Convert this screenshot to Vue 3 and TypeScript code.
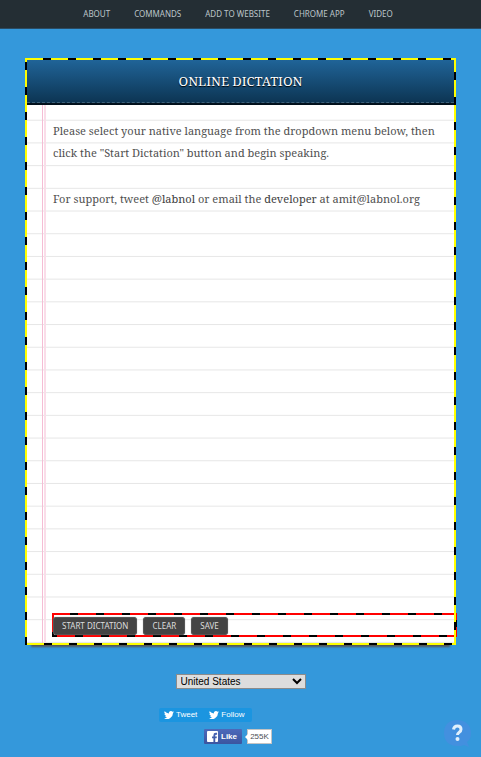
<script setup lang="ts">
import { ref } from 'vue'

interface NavLink {
  label: string
  href: string
}

const links: NavLink[] = [
  { label: 'ABOUT', href: '#about' },
  { label: 'COMMANDS', href: '#commands' },
  { label: 'ADD TO WEBSITE', href: '#website' },
  { label: 'CHROME APP', href: '#app' },
  { label: 'VIDEO', href: '#video' },
]

const countries: string[] = ['United States', 'United Kingdom', 'India', 'France', 'Germany', 'Spain']
const country = ref<string>('United States')
const bird =
  'M24 4.6a10 10 0 0 1-2.8.8 5 5 0 0 0 2.2-2.7 10 10 0 0 1-3.1 1.2 4.9 4.9 0 0 0-8.4 4.5A14 14 0 0 1 1.7 3.1a4.9 4.9 0 0 0 1.5 6.6 5 5 0 0 1-2.2-.6v.1a4.9 4.9 0 0 0 3.9 4.8 5 5 0 0 1-2.2.1 4.9 4.9 0 0 0 4.6 3.4A10 10 0 0 1 0 19.5a14 14 0 0 0 21.5-12.4A10 10 0 0 0 24 4.6z'
</script>

<template>
  <div class="page">
    <nav class="topbar">
      <a v-for="link in links" :key="link.label" :href="link.href">{{ link.label }}</a>
    </nav>

    <main>
      <section class="notepad">
        <header class="title">
          <h1>ONLINE DICTATION</h1>
        </header>
        <div class="paper">
          <div class="rules"></div>
          <div class="note">
            <p>
              Please select your native language from the dropdown menu below, then click the
              "Start Dictation" button and begin speaking.
            </p>
            <p>
              For support, tweet <a href="#labnol">@labnol</a> or email the
              <a href="#developer">developer</a> at amit@labnol.org
            </p>
          </div>
          <div class="actions">
            <button type="button">START DICTATION</button>
            <button type="button">CLEAR</button>
            <button type="button">SAVE</button>
          </div>
        </div>
      </section>

      <div class="language">
        <select v-model="country" aria-label="Language">
          <option v-for="name in countries" :key="name">{{ name }}</option>
        </select>
      </div>

      <div class="social">
        <div class="twitter">
          <a href="#tweet"><svg viewBox="0 0 24 24"><path :d="bird" /></svg>Tweet</a>
          <a href="#follow"><svg viewBox="0 0 24 24"><path :d="bird" /></svg>Follow</a>
        </div>
        <div class="facebook">
          <button type="button">
            <svg viewBox="0 0 12 12">
              <path
                fill-rule="evenodd"
                d="M1 0h10q1 0 1 1v10q0 1-1 1H9V8h1.500l.3-2H9V5q0-1 1-1h1V2H9.500Q7 2 7 4.500V6H5.500v2H7v4H1q-1 0-1-1V1q0-1 1-1z"
              />
            </svg>
            Like
          </button>
          <span class="count">255K</span>
        </div>
      </div>
    </main>

    <button class="help" type="button" aria-label="Help">
      <svg viewBox="0 0 30 30">
        <path
          d="M14 1C6 1 1 6 1 14s5 13 13 13c3 0 5 0 7-1l5 2-2-5c3-2 4-5 4-9 0-8-6-13-14-13z"
          fill="#4390df"
        />
        <path
          d="M10.500 10.500q.5-3.500 4-3.500t3.500 3.300q0 2-2 3.200-1.500 1-1.500 2.500"
          fill="none"
          stroke="#e2f0fc"
          stroke-width="3"
        />
        <circle cx="14.500" cy="20" r="2" fill="#e2f0fc" />
      </svg>
    </button>
  </div>
</template>

<style>
body {
  background: #3498db;
}
</style>

<style scoped>
.page {
  min-height: 100vh;
  font-family: "Liberation Sans", Arial, sans-serif;
}

.topbar {
  box-sizing: border-box;
  height: 29px;
  padding-right: 5px;
  display: flex;
  justify-content: center;
  align-items: center;
  gap: 24px;
  background: #242e34;
  border-bottom: 1px solid #2a4b63;
}

.topbar a {
  color: #bcc5c9;
  font: 8px/12px "Noto Sans", "Open Sans", sans-serif;
  text-decoration: none;
}

main {
  padding: 29px 25px 0;
}

.notepad {
  position: relative;
  padding: 2px;
  background: #fff;
  box-shadow: 0 8px 2px -6px #555;
}

.notepad::after,
.actions::before {
  content: "";
  position: absolute;
  inset: 0;
  pointer-events: none;
}

.notepad::after {
  z-index: 2;
  background:
    repeating-linear-gradient(90deg, #ff0 0 17px, #000 17px 25px) 1px 0 / 100% 2px no-repeat,
    repeating-linear-gradient(90deg, #ff0 0 17px, #000 17px 25px) 2px 100% / 100% 2px no-repeat,
    repeating-linear-gradient(#ff0 0 4px, #000 4px 12px, #ff0 12px 25px) 0 0 / 2px 100% no-repeat,
    repeating-linear-gradient(#ff0 0 14px, #000 14px 22px, #ff0 22px 25px) 100% 0 / 2px 100% no-repeat;
}

.title {
  box-sizing: border-box;
  height: 45px;
  padding-bottom: 2px;
  position: relative;
  display: flex;
  align-items: center;
  justify-content: center;
  background: linear-gradient(#206498, #0c3452);
  border-bottom: 2px solid #02111c;
}

.title::after {
  content: "";
  position: absolute;
  left: 0;
  right: 0;
  bottom: 0;
  border-bottom: 1px dashed #3d6079;
}

h1 {
  margin: 0;
  color: #fff;
  font: 400 13px/20px "Droid Serif", "Noto Serif", "Liberation Serif", serif;
  text-shadow: 0 1px 1px #000;
}

.paper {
  position: relative;
  box-sizing: border-box;
  min-height: 538px;
  padding: 15px 0 6px 26px;
  display: flex;
  flex-direction: column;
}

/* Twenty-four ruled rows with a double pink margin line */
.rules {
  position: absolute;
  inset: -7px 0 0;
  clip-path: inset(7px 0 0);
  background:
    linear-gradient(90deg, transparent 15px, #f5bdd5 15px 16px, transparent 16px 17px, #fadde9 17px 19px, transparent 19px),
    linear-gradient(0deg, #e6e6e6 1px, transparent 1px) 0 0 / 100% calc(100% / 24);
}

.note {
  position: relative;
  flex: 1;
  padding-right: 18px;
  color: #505050;
  font: 11px/22px "Droid Serif", "Noto Serif", "Liberation Serif", serif;
}

.note p {
  margin: 0 0 24px;
}

.note a {
  color: #404040;
  text-decoration: none;
}

.actions {
  position: relative;
  z-index: 1;
  box-sizing: border-box;
  height: 24px;
  margin: 0 -3px 0 -1px;
  padding: 4px 1px 2px;
  display: flex;
  gap: 6px;
}

.actions::before {
  background:
    repeating-linear-gradient(90deg, #f00 0 18px, #000 18px 26px) 0 0 / 100% 2px no-repeat,
    repeating-linear-gradient(90deg, #000 0 5px, #f00 5px 23px, #000 23px 26px) 0 100% / 100% 2px no-repeat,
    linear-gradient(#000 0 2px, #f00 2px 19px, #000 19px) 0 0 / 2px 100% no-repeat,
    linear-gradient(#f00 0 7px, #000 7px 14px, #f00 14px) 100% 0 / 2px 100% no-repeat;
}

.actions button {
  position: relative;
  padding: 0 8px;
  border: 1px solid #555;
  border-radius: 3px;
  background: #444;
  color: #ddd;
  font: 8px/16px "Noto Sans", "Open Sans", sans-serif;
  box-shadow: 0 0 1px #777;
}

.language {
  margin-top: 29px;
  display: flex;
  justify-content: center;
}

select {
  width: 130px;
  height: 15px;
  padding: 0;
  border: 1px solid #8b8b8b;
  border-radius: 0;
  background: #ddd;
  color: #000;
  font: 10px "Liberation Sans", Arial, sans-serif;
}

.social {
  width: 163px;
  margin: 19px auto 0;
}

.twitter {
  width: 93px;
  display: flex;
  background: #1b95e0;
  border-radius: 2px;
}

.twitter a {
  display: flex;
  align-items: center;
  gap: 2px;
  padding: 0 7px 0 5px;
  color: #fff;
  font-size: 8px;
  line-height: 14px;
  text-decoration: none;
}

.twitter svg {
  width: 10px;
  height: 10px;
  fill: #fff;
}

.facebook {
  display: flex;
  gap: 5px;
  margin: 7px 0 0 45px;
}

.facebook button {
  width: 38px;
  height: 15px;
  padding: 0 3px;
  display: flex;
  align-items: center;
  gap: 3px;
  border: 0;
  border-radius: 1px;
  background: linear-gradient(#4c69ba, #3b55a0);
  color: #fff;
  font: bold 8px/15px "Liberation Sans", Arial, sans-serif;
}

.facebook svg {
  width: 11px;
  height: 11px;
  flex: none;
  fill: #fff;
}

.count {
  position: relative;
  box-sizing: border-box;
  width: 25px;
  height: 15px;
  border: 1px solid #c4c4c4;
  background: #fff;
  color: #4b4f56;
  font-size: 8px;
  line-height: 14px;
  text-align: center;
}

.count::before {
  content: "";
  position: absolute;
  left: -3px;
  top: 4px;
  border: solid transparent;
  border-width: 3px 3px 3px 0;
  border-right-color: #fff;
}

.help {
  position: fixed;
  right: 8px;
  bottom: 8px;
  padding: 0;
  border: 0;
  background: none;
}

.help svg {
  display: block;
  width: 30px;
  height: 30px;
}
</style>
